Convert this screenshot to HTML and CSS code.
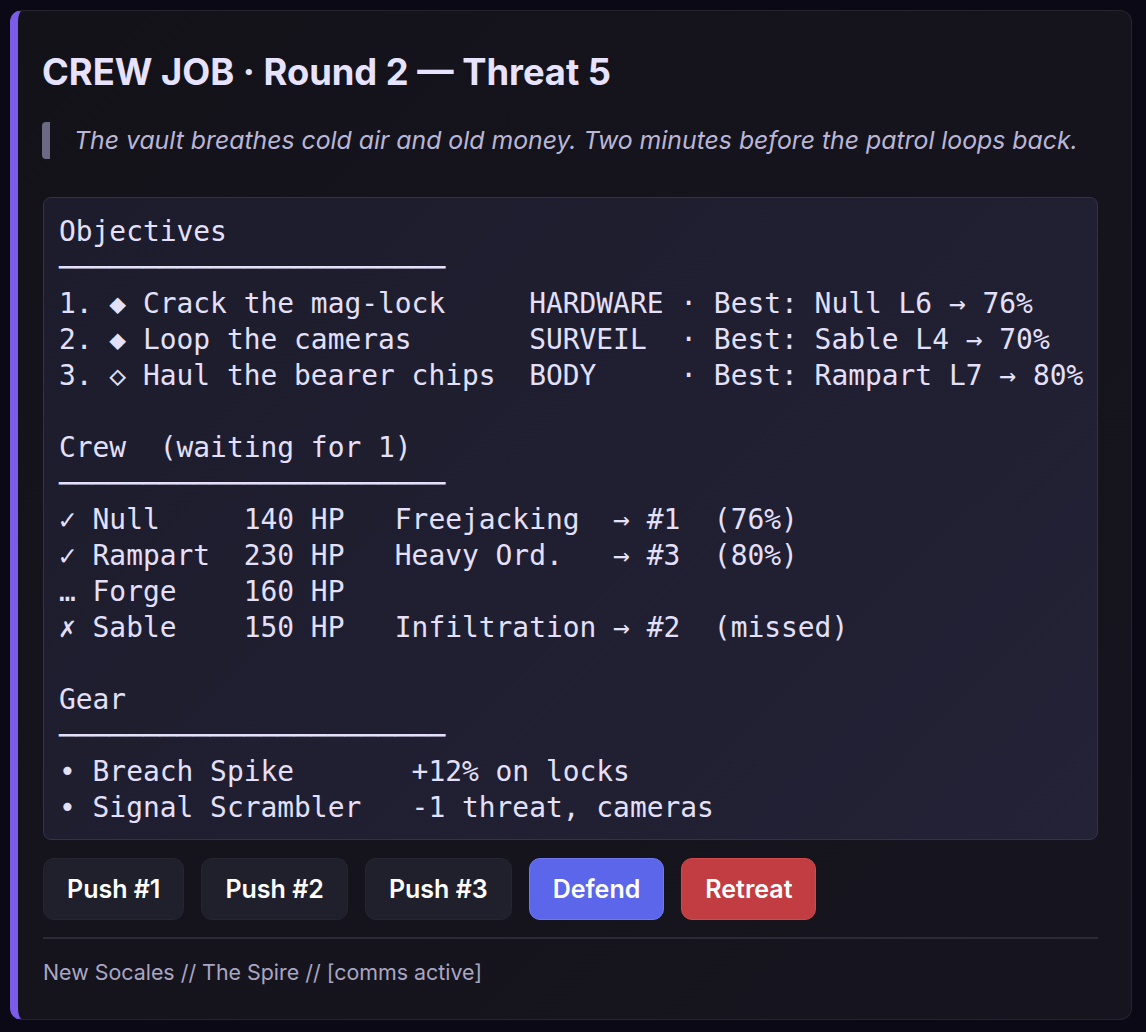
FILE: index.html
```html
<!DOCTYPE html>
<html lang="en">
<head>
<meta charset="utf-8">
<title>Crew Job</title>
<link rel="stylesheet" href="styles.css">
</head>
<body>
<article class="card">
  <h1 class="title">CREW JOB · Round 2 — Threat 5</h1>
  <blockquote class="quote"><em>The vault breathes cold air and old money. Two minutes before the patrol loops back.</em></blockquote>
  <pre class="code">Objectives
───────────────────────
1. ◆ Crack the mag-lock     HARDWARE · Best: Null L6 → 76%
2. ◆ Loop the cameras       SURVEIL  · Best: Sable L4 → 70%
3. ◇ Haul the bearer chips  BODY     · Best: Rampart L7 → 80%

Crew  (waiting for 1)
───────────────────────
✓ Null     140 HP   Freejacking  → #1  (76%)
✓ Rampart  230 HP   Heavy Ord.   → #3  (80%)
… Forge    160 HP
✗ Sable    150 HP   Infiltration → #2  (missed)

Gear
───────────────────────
• Breach Spike       +12% on locks
• Signal Scrambler   -1 threat, cameras</pre>
  <div class="actions">
    <button class="btn btn-secondary">Push #1</button>
    <button class="btn btn-secondary">Push #2</button>
    <button class="btn btn-secondary">Push #3</button>
    <button class="btn btn-primary">Defend</button>
    <button class="btn btn-danger">Retreat</button>
  </div>
  <footer class="footer">New Socales // The Spire // [comms active]</footer>
</article>
</body>
</html>
```

FILE: styles.css
```css
* { box-sizing: border-box; }
html, body { margin: 0; padding: 0; }
body {
  background: #0a0915;
  padding: 10px 14px 12px 10px;
  font-family: "Inter", "Noto Sans", sans-serif;
  color: #e6e3ff;
}
.card {
  width: 1122px;
  height: 1010px;
  background: linear-gradient(135deg, #141219 0%, #16151f 100%);
  border: 1px solid #26252f;
  border-left: 8px solid #7b5ce8;
  border-radius: 12px;
  padding: 39px 33px 0 24px;
  display: flex;
  flex-direction: column;
}
.title {
  margin: 0;
  font-size: 36.3px;
  line-height: 44px;
  font-weight: 700;
  color: #e7e3ff;
  letter-spacing: 0;
}
.quote {
  margin: 28px 0 0 0;
  padding: 0 0 0 24px;
  border-left: 8px solid #6b6a84;
  border-radius: 4px;
  font-size: 24.8px;
  line-height: 37px;
  color: #bab6d8;
}
.quote em { font-style: italic; }
.code {
  margin: 38px 0 0 1px;
  padding: 16px 15px 13px 15px;
  background: linear-gradient(135deg, #1d1c2c 0%, #232236 100%);
  border: 1px solid #33324a;
  border-radius: 8px;
  font-family: "DejaVu Sans Mono", "Liberation Mono", monospace;
  font-size: 27.9px;
  line-height: 36px;
  color: #e4e0fa;
  white-space: pre;
  overflow: hidden;
}
.actions {
  display: flex;
  gap: 17px;
  margin: 18px 0 0 1px;
}
.btn {
  height: 62px;
  padding: 0 23px;
  border-radius: 11px;
  font-family: "Inter", "Noto Sans", sans-serif;
  font-size: 25px;
  font-weight: 600;
  color: #ffffff;
  border: 1px solid transparent;
}
.btn-secondary {
  background: #20202c;
  border-color: #262533;
}
.btn-primary {
  background: #5b66ea;
  border-color: #6f78f0;
}
.btn-danger {
  background: #c23d41;
  border-color: #d0494d;
}
.footer {
  margin: 17px 0 0 1px;
  padding-top: 19px;
  border-top: 2px solid #2b2a36;
  font-size: 21.4px;
  line-height: 28px;
  color: #a9a6c3;
}
```
